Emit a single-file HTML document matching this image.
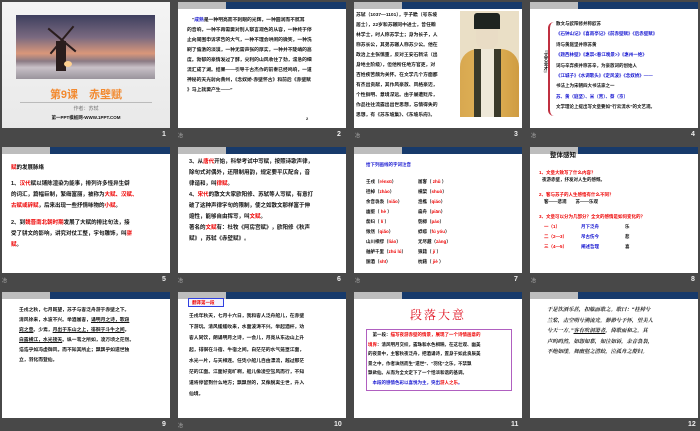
<!DOCTYPE html>
<html><head><meta charset="utf-8">
<style>
*{margin:0;padding:0;box-sizing:border-box}
body{width:700px;height:431px;background:#484848;position:relative;overflow:hidden;font-family:"Liberation Sans","Noto Sans CJK SC",sans-serif}
.s{position:absolute;width:168px;height:126px;background:#fff;overflow:hidden}
.hb{position:absolute;left:0;top:0;width:168px;height:7px;background:#173a6b}
.hb:before{content:"";position:absolute;left:0;top:0;width:48px;height:7px;background:#bdbdbd}
.n{position:absolute;color:#eee;font-size:7px;font-weight:bold}
.t{position:absolute;font-size:5px;line-height:10px;font-weight:bold;color:#111;white-space:nowrap}
.r{color:#e00}.b{color:#1515d0}
.m{position:absolute;color:#bbb;font-size:5px}
</style></head><body>

<!-- slide 1 -->
<div class="s" style="left:2px;top:2px;background:linear-gradient(#f4f4f4,#e9e9e9)">
 <div style="position:absolute;left:14px;top:13px;width:139px;height:64px;background:linear-gradient(180deg,#3e3f5e 0%,#7a6a80 35%,#d9977a 60%,#8b7a84 72%,#c9c1c8 82%,#9a949c 100%)">
  <div style="position:absolute;left:40px;top:26px;width:10px;height:30px;background:#2a1d1d"></div>
  <div style="position:absolute;left:28px;top:24px;width:36px;height:2px;background:#2a1d1d;transform:rotate(40deg)"></div>
  <div style="position:absolute;left:28px;top:24px;width:36px;height:2px;background:#2a1d1d;transform:rotate(-50deg)"></div>
  <div style="position:absolute;left:48px;top:46px;width:8px;height:6px;border-radius:50%;background:#ffd090"></div>
 </div>
 <div style="position:absolute;left:0;width:168px;top:84px;text-align:center;color:#f28a30;font-size:11px;font-weight:bold">第9课　赤壁赋</div>
 <div style="position:absolute;left:18px;top:100px;width:132px;height:1px;background:#bbb"></div>
 <div style="position:absolute;left:0;width:168px;top:103px;text-align:center;color:#777;font-size:5px">作者：苏轼</div>
 <div style="position:absolute;left:0;width:168px;top:113px;text-align:center;color:#111;font-size:4.5px;font-weight:bold">第一PPT模板网-WWW.1PPT.COM</div>
</div>
<div class="n" style="left:162px;top:131px">1</div>

<!-- slide 2 -->
<div class="s" style="left:178px;top:2px">
 <div class="hb"></div>
 <div class="t" style="left:9px;top:14px;font-size:4.8px">　“<span class="b">成熟</span>是一种明亮而不刺眼的光辉，一种圆润而不腻耳<br>的音响，一种不再需要对别人察言观色的从容，一种终于停<br>止向周围申诉求告的大气，一种不理会哄闹的微笑，一种洗<br>刷了偏激的淡漠，一种无需声张的厚实，一种并不陡峭的高<br>度。勃郁的豪情发过了酵，尖利的山风收住了劲，湍急的细<br>流汇成了湖。结果——引导千古杰作的前奏已经鸣响，一道<br>神秘的天光射向黄州，《念奴娇·赤壁怀古》和前后《赤壁赋<br>》马上就要产生——”</div>
 <div class="t" style="left:128px;top:112px;font-size:4px">2</div>
</div>
<div class="m" style="left:178px;top:132px">冶</div>
<div class="n" style="left:337px;top:131px">2</div>

<!-- slide 3 -->
<div class="s" style="left:354px;top:2px">
 <div class="hb"></div>
 <div class="t" style="left:2px;top:9px;font-size:4.8px">苏轼（1037—1101），字子瞻（号东坡<br>居士），22岁和苏辙同中进士，曾任翰<br>林学士，时人称苏学士；身为长子，人<br>称苏长公，其弟苏辙人称苏少公。他在<br>政治上主张慎重，反对王安石新法（出<br>身地主阶级），但他所任地方官吏，对<br>百姓疾苦颇为关怀。在文学几个方面都<br>有杰出贡献，其作风豪放、风格豪迈，<br>个性鲜明、意境深远。由于屡遭贬斥，<br>作品往往流露出出世思想，忘情得失的<br>思想，有《苏东坡集》、《东坡乐府》。</div>
 <div style="position:absolute;left:106px;top:9px;width:59px;height:106px;background:#eadfc6">
  <div style="position:absolute;left:0;top:38px;width:59px;height:68px;background:linear-gradient(90deg,#d8a850,#e2b458 50%,#cf9c42);border-radius:18px 18px 0 0"></div>
  <div style="position:absolute;left:14px;top:2px;width:26px;height:16px;background:#1e2420;border-radius:3px 3px 0 0"></div>
  <div style="position:absolute;left:16px;top:18px;width:22px;height:20px;background:#e9dcc5;border-radius:0 0 9px 9px"></div>
  <div style="position:absolute;left:14px;top:38px;width:7px;height:68px;background:#3a3a2a"></div>
  <div style="position:absolute;left:34px;top:38px;width:7px;height:68px;background:#3a3a2a"></div>
  <div style="position:absolute;left:21px;top:38px;width:13px;height:68px;background:#eee8d8"></div>
 </div>
</div>
<div class="m" style="left:355px;top:132px">冶</div>
<div class="n" style="left:514px;top:131px">3</div>

<!-- slide 4 -->
<div class="s" style="left:530px;top:2px">
 <div class="hb"></div>
 <div style="position:absolute;left:13px;top:46px;font-size:4.5px;font-weight:bold;writing-mode:vertical-rl;color:#111">『文艺全才』</div>
 <div style="position:absolute;left:18px;top:20px;width:6px;height:94px;border-left:2px solid #c03040;border-radius:6px 0 0 6px"></div>
 <div class="t" style="left:26px;top:17px;font-size:4.5px;line-height:10.4px">散文与欧阳修并称欧苏<br><span class="b">《石钟山记》《喜雨亭记》《前赤壁赋》《后赤壁赋》</span><br>诗与黄庭坚并称苏黄<br><span class="b">《题西林壁》《惠崇&lt;春江晚景&gt;》《惠州一绝》</span><br>词与辛弃疾并称苏辛，为豪放词的创始人<br><span class="b">《江城子》《水调歌头》《定风波》《念奴娇》——</span><br>书法上为宋朝四大书法家之一<br><span class="b">苏、黄（庭坚）、米（芾）、蔡（京）</span><br>文学理论上提出写文章要如“行云流水”的文艺观。</div>
</div>
<div class="m" style="left:531px;top:132px">冶</div>
<div class="n" style="left:691px;top:131px">4</div>

<!-- slide 5 -->
<div class="s" style="left:2px;top:147px">
 <div class="hb"></div>
 <div class="t" style="left:9px;top:16px;font-size:5.5px;line-height:11px"><span class="r">赋</span>的发展脉络</div>
 <div class="t" style="left:9px;top:32px;font-size:5.5px;line-height:11px">1、<span class="r">汉代</span>赋以铺陈渲染为能事，排列许多怪异生僻<br>的词汇，篇幅巨制，繁缛富丽，被称为<span class="r">大赋、汉赋、</span><br><span class="r">古赋或辞赋</span>，后来出现一些抒情咏物的<span class="r">小赋</span>。</div>
 <div class="t" style="left:9px;top:71px;font-size:5.5px;line-height:11px">2、到<span class="r">魏晋南北朝时期</span>发展了大赋的排比句法，接<br>受了骈文的影响，讲究对仗工整，字句雕饰，叫<span class="r">骈</span><br><span class="r">赋</span>。</div>
</div>
<div class="m" style="left:2px;top:277px">冶</div>
<div class="n" style="left:162px;top:276px">5</div>

<!-- slide 6 -->
<div class="s" style="left:178px;top:147px">
 <div class="hb"></div>
 <div class="t" style="left:11px;top:10px;font-size:5.5px;line-height:11px">3、从<span class="r">唐代</span>开始，科举考试中写赋，按照诗歌声律，<br>除句式对偶外，还限制用韵，规定要平仄配合，音<br>律谐和，叫<span class="r">律赋</span>。<br>4、<span class="r">宋代</span>的散文大家欧阳修、苏轼等人写赋，有意打<br>破了这种声律字句的限制，使之如散文那样富于伸<br>缩性，能够自由挥写，叫<span class="r">文赋</span>。<br>著名的<span class="r">文赋</span>有：杜牧《阿房宫赋》，欧阳修《秋声<br>赋》，苏轼《赤壁赋》。</div>
</div>
<div class="m" style="left:178px;top:277px">冶</div>
<div class="n" style="left:337px;top:276px">6</div>

<!-- slide 7 -->
<div class="s" style="left:354px;top:147px">
 <div class="hb"></div>
 <div class="t b" style="left:12px;top:13px;font-size:4.5px">给下列画线的字词注音</div>
 <div class="t" style="left:12px;top:30px;font-size:4.5px;line-height:10px">壬戌（<span class="r">rénxū</span>）<br>桂棹（<span class="r">zhào</span>）<br>余音袅袅（<span class="r">niǎo</span>）<br>幽壑（ <span class="r">hè</span> ）<br>嫠妇（ <span class="r">lí</span> ）<br>愀然（<span class="r">qiǎo</span>）<br>山川相缪（<span class="r">liáo</span>）<br>舳舻千里（<span class="r">zhú lú</span>）<br>酾酒（<span class="r">shī</span>）</div>
 <div class="t" style="left:64px;top:30px;font-size:4.5px;line-height:10px">属客（ <span class="r">zhǔ</span> ）<br>横槊（<span class="r">shuò</span>）<br>渔樵（<span class="r">qiáo</span>）<br>扁舟（<span class="r">piān</span>）<br>匏樽（<span class="r">páo</span>）<br>蜉蝣（<span class="r">fú yóu</span>）<br>无尽藏（<span class="r">zàng</span>）<br>狼籍（ <span class="r">jí</span> ）<br>枕藉（ <span class="r">jiè</span> ）</div>
</div>
<div class="m" style="left:355px;top:277px">冶</div>
<div class="n" style="left:514px;top:276px">7</div>

<!-- slide 8 -->
<div class="s" style="left:530px;top:147px">
 <div class="hb"></div>
 <div class="t" style="left:20px;top:3px;font-size:6.5px;line-height:12px">整体感知</div>
 <div class="t r" style="left:9px;top:22px;font-size:4.5px;line-height:7px">1、文章大致写了什么内容？</div>
 <div class="t" style="left:12px;top:29px;font-size:4.5px;line-height:7px">夜游赤壁，抒发对人生的感慨。</div>
 <div class="t r" style="left:9px;top:44px;font-size:4.5px;line-height:7px">2、客与苏子的人生感悟有什么不同？</div>
 <div class="t" style="left:14px;top:51px;font-size:4.5px;line-height:7px">客——悲观　　苏——乐观</div>
 <div class="t r" style="left:9px;top:66px;font-size:4.5px;line-height:7px">3、文章可以分为几部分？全文的感情是如何变化的？</div>
 <div class="t r" style="left:14px;top:75px;font-size:4.5px">一（1）<br>二（2—3）<br>三（4—5）</div>
 <div class="t b" style="left:51px;top:75px;font-size:4.5px">月下泛舟<br>吊古伤今<br>阐述哲理</div>
 <div class="t" style="left:95px;top:75px;font-size:4.5px">乐<br>悲<br>喜</div>
</div>
<div class="m" style="left:531px;top:277px">冶</div>
<div class="n" style="left:691px;top:276px">8</div>

<!-- slide 9 -->
<div class="s" style="left:2px;top:292px">
 <div class="hb"></div>
 <div class="t" style="left:17px;top:14px;font-size:4.8px">壬戌之秋，七月既望，苏子与客泛舟游于赤壁之下。<br>清风徐来，水波不兴。举酒属客，<u>诵明月之诗，歌窈</u><br><u>窕之章</u>。少焉，<u>月出于东山之上，徘徊于斗牛之间</u>。<br><u>白露横江，水光接天</u>。纵一苇之所如，凌万顷之茫然。<br>浩浩乎如冯虚御风，而不知其所止；飘飘乎如遗世独<br>立，羽化而登仙。</div>
</div>
<div class="n" style="left:162px;top:421px">9</div>

<!-- slide 10 -->
<div class="s" style="left:178px;top:292px">
 <div class="hb"></div>
 <div style="position:absolute;left:10px;top:6px;width:36px;height:9px;border:1px solid #3040e0;background:#f4f4ff"></div>
 <div class="t r" style="left:14px;top:6px;font-size:4.5px;line-height:9px">翻译第一段</div>
 <div class="t" style="left:11px;top:19px;font-size:4.8px;line-height:11.2px">壬戌年秋天，七月十六日，我和客人泛舟船儿，在赤壁<br>下游玩。清风缓缓吹来，水面波涛不兴。举起酒杯，劝<br>客人同饮，朗诵明月之诗，一会儿，月亮从东边山上升<br>起，徘徊在斗宿、牛宿之间。白茫茫的水气笼罩江面，<br>水光一片，与天相连。任凭小船儿自由漂流，越过那茫<br>茫的江面。江面好宽旷啊，船儿像凌空驾风而行，不知<br>道将停留到什么地方；飘飘然的，又像脱离尘世，升入<br>仙境。</div>
</div>
<div class="m" style="left:178px;top:422px">冶</div>
<div class="n" style="left:334px;top:421px">10</div>

<!-- slide 11 -->
<div class="s" style="left:354px;top:292px">
 <div class="hb"></div>
 <div style="position:absolute;left:0;width:168px;top:14px;text-align:center;color:#e01020;font-size:12px;letter-spacing:2px;font-family:'Liberation Serif','Noto Serif CJK SC',serif">段落大意</div>
 <div style="position:absolute;left:12px;top:37px;width:146px;height:62px;border:1px solid #b060c0"></div>
 <div class="t" style="left:14px;top:38px;font-size:4.5px;line-height:9.5px">　第一段：<span class="r">描写夜游赤壁的情景，展现了一个诗情画意的</span><br><span class="r">境界</span>：清风明月交织，露珠和水色相映。在这壮观、幽美<br>的夜景中，主客秋夜泛舟，把酒诵诗，置身于如此良辰美<br>景之中，作者油然而生“遗世”、“羽化”之乐，不禁飘<br>飘欲仙。从而为全文定下了一个恬淡和谐的基调。<br><span class="b">　本段的感情色彩以喜悦为主，突出<span class="r">游人之乐</span>。</span></div>
</div>
<div class="n" style="left:511px;top:421px">11</div>

<!-- slide 12 -->
<div class="s" style="left:530px;top:292px">
 <div class="hb"></div>
 <div class="t" style="left:17px;top:13px;font-size:5.3px;line-height:10.5px;font-style:italic;font-family:'Liberation Serif','Noto Serif CJK SC',serif">于是饮酒乐甚，扣舷而歌之。歌曰：“桂棹兮<br>兰桨，击空明兮溯流光。渺渺兮予怀，望美人<br>兮天一方。”<u>客有吹洞箫者</u>，倚歌而和之。其<br>声呜呜然，如怨如慕，如泣如诉，余音袅袅，<br>不绝如缕。舞幽壑之潜蛟，泣孤舟之嫠妇。</div>
</div>
<div class="n" style="left:688px;top:421px">12</div>

</body></html>
